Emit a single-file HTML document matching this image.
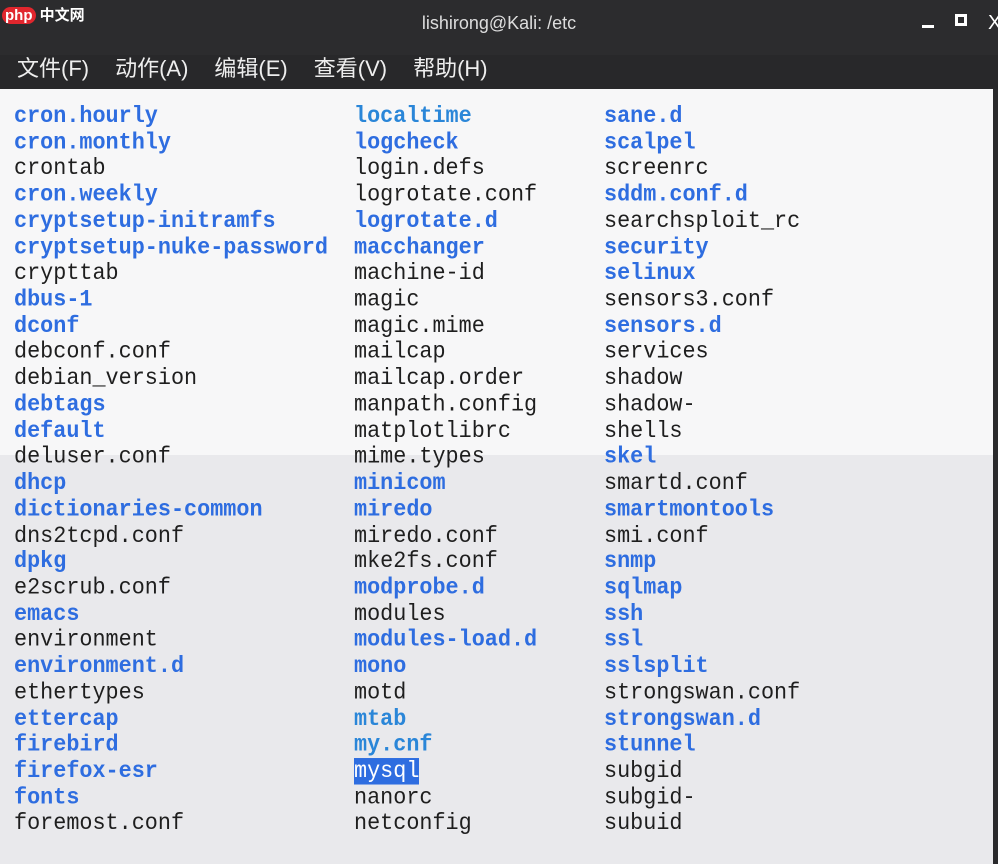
<!DOCTYPE html>
<html><head><meta charset="utf-8"><style>
*{margin:0;padding:0;box-sizing:border-box}
body{width:998px;height:864px;overflow:hidden;background:#e9e9ec;position:relative;font-family:"Liberation Mono",monospace}
#title{position:absolute;left:0;top:0;width:998px;height:55px;background:#2c2c2e;color:#ddd;font:18px "Liberation Sans","Noto Sans CJK SC",sans-serif;text-align:center;line-height:46px}
#menu{position:absolute;left:0;top:55px;width:998px;height:34px;background:#28282a;color:#eee;font:22px "Liberation Sans","Noto Sans CJK SC",sans-serif;line-height:28px;padding-left:17px}
#menu span{margin-right:26px}
#white{position:absolute;left:0;top:89px;width:993px;height:366px;background:#f7f7f8}
#edge{position:absolute;right:0;top:89px;width:5px;height:775px;background:#2a2a2c}
.col{position:absolute;top:104px;font-size:21.8px;line-height:24.72px;color:#1e1e1e;white-space:pre;transform:scaleY(1.06);transform-origin:0 0}
.b{color:#2e6de0;font-weight:bold}
.c{color:#2a86d8;font-weight:bold}
.h{background:#2e6de0;color:#fff}
#logo{position:absolute;left:2px;top:6px;font:bold 15px "Liberation Sans","Noto Sans CJK SC",sans-serif;color:#fff;line-height:20px}
#logo b{background:#e1262d;border-radius:9px;padding:0 3px}
.ctl{position:absolute;top:14px;width:12px;height:12px}
</style></head><body>
<div id="title"><div id="logo"><b>php</b> 中文网</div>lishirong@Kali: /etc
<div class="ctl" style="left:922px;top:25px;height:3px;background:#fff"></div>
<div class="ctl" style="left:955px;border:3px solid #fff"></div>
<div style="position:absolute;left:988px;top:0;color:#fff;font-size:20px">X</div></div>
<div id="menu"><span>文件(F)</span><span>动作(A)</span><span>编辑(E)</span><span>查看(V)</span><span>帮助(H)</span></div>
<div id="white"></div>
<div id="edge"></div>
<div class="col" style="left:14px"><span class="b">cron.hourly</span>
<span class="b">cron.monthly</span>
crontab
<span class="b">cron.weekly</span>
<span class="b">cryptsetup-initramfs</span>
<span class="b">cryptsetup-nuke-password</span>
crypttab
<span class="b">dbus-1</span>
<span class="b">dconf</span>
debconf.conf
debian_version
<span class="b">debtags</span>
<span class="b">default</span>
deluser.conf
<span class="b">dhcp</span>
<span class="b">dictionaries-common</span>
dns2tcpd.conf
<span class="b">dpkg</span>
e2scrub.conf
<span class="b">emacs</span>
environment
<span class="b">environment.d</span>
ethertypes
<span class="b">ettercap</span>
<span class="b">firebird</span>
<span class="b">firefox-esr</span>
<span class="b">fonts</span>
foremost.conf</div>
<div class="col" style="left:354px"><span class="c">localtime</span>
<span class="b">logcheck</span>
login.defs
logrotate.conf
<span class="b">logrotate.d</span>
<span class="b">macchanger</span>
machine-id
magic
magic.mime
mailcap
mailcap.order
manpath.config
matplotlibrc
mime.types
<span class="b">minicom</span>
<span class="b">miredo</span>
miredo.conf
mke2fs.conf
<span class="b">modprobe.d</span>
modules
<span class="b">modules-load.d</span>
<span class="b">mono</span>
motd
<span class="c">mtab</span>
<span class="c">my.cnf</span>
<span class="h">mysql</span>
nanorc
netconfig</div>
<div class="col" style="left:604px"><span class="b">sane.d</span>
<span class="b">scalpel</span>
screenrc
<span class="b">sddm.conf.d</span>
searchsploit_rc
<span class="b">security</span>
<span class="b">selinux</span>
sensors3.conf
<span class="b">sensors.d</span>
services
shadow
shadow-
shells
<span class="b">skel</span>
smartd.conf
<span class="b">smartmontools</span>
smi.conf
<span class="b">snmp</span>
<span class="b">sqlmap</span>
<span class="b">ssh</span>
<span class="b">ssl</span>
<span class="b">sslsplit</span>
strongswan.conf
<span class="b">strongswan.d</span>
<span class="b">stunnel</span>
subgid
subgid-
subuid</div>
</body></html>
